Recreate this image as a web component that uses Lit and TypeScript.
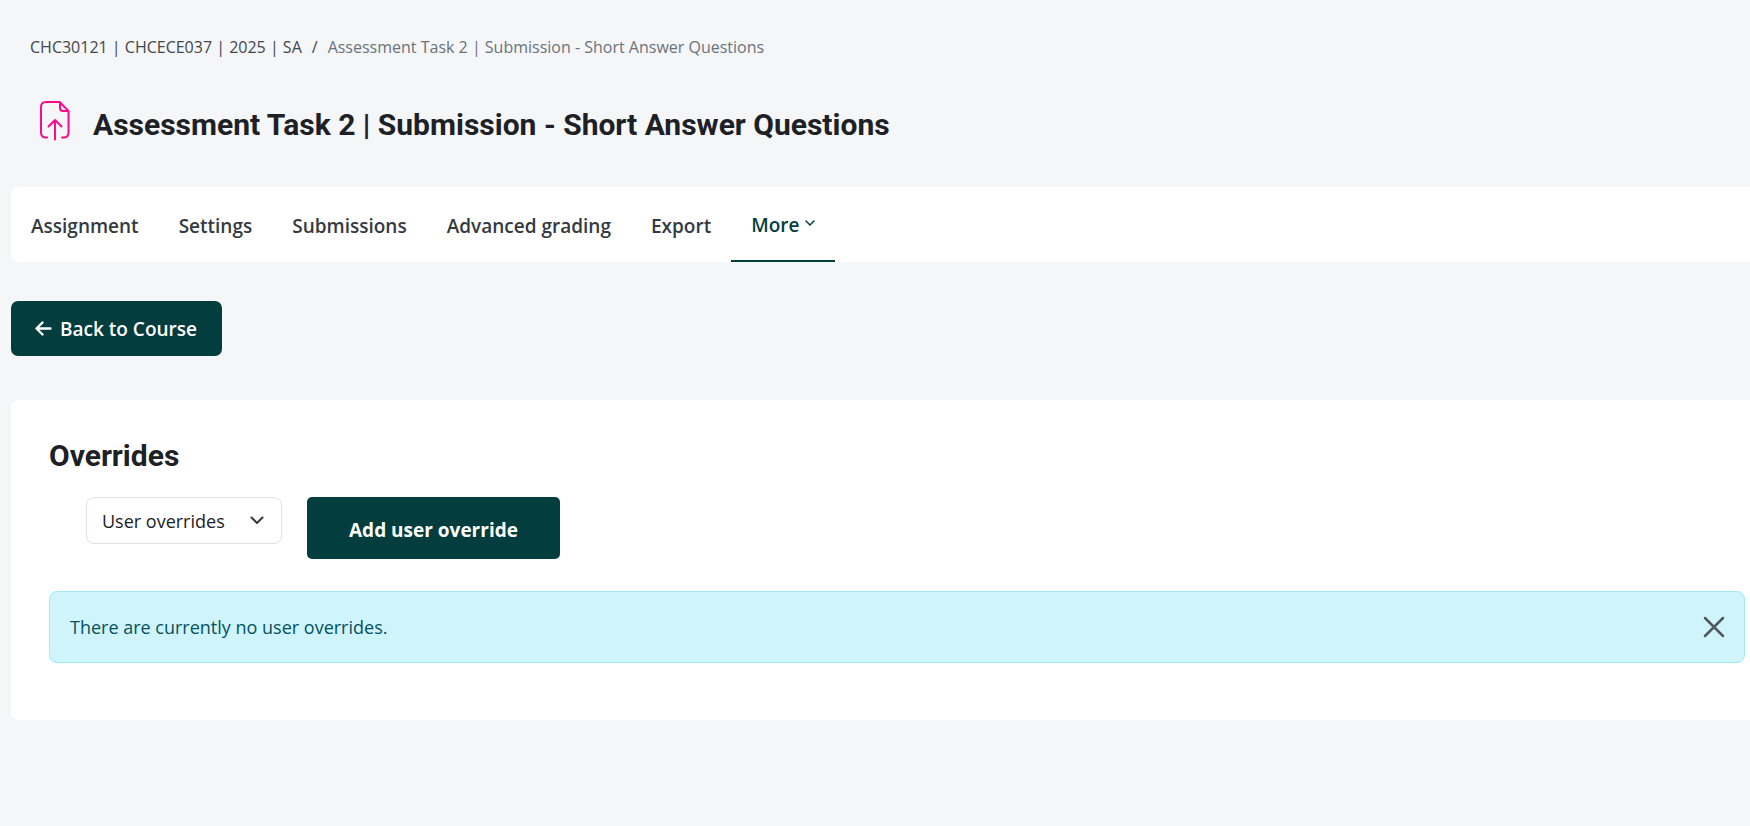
import { LitElement, html, css } from "lit";
import { customElement, state } from "lit/decorators.js";

const COURSE = "CHC30121 | CHCECE037 | 2025 | SA";
const ACTIVITY = "Assessment Task 2 | Submission - Short Answer Questions";
const TABS = ["Assignment", "Settings", "Submissions", "Advanced grading", "Export"];

@customElement("app-root")
export class AppRoot extends LitElement {
  @state() private mode = "user";
  @state() private noticeOpen = true;

  static styles = css`
    :host {
      display: block;
      box-sizing: border-box;
      min-height: 100vh;
      padding: 33px 0 40px 11px;
      background: #f4f6f8;
      color: #1d2125;
      font-family: "Segoe UI", "Open Sans", "Noto Sans", sans-serif;
      font-size: 19px;
      line-height: 28px;
    }
    * {
      box-sizing: border-box;
    }
    a {
      color: inherit;
      text-decoration: none;
    }
    button,
    select {
      font: inherit;
      margin: 0;
    }
    svg {
      display: block;
      fill: none;
      stroke: currentColor;
      stroke-linecap: round;
      stroke-linejoin: round;
    }
    .crumbs {
      display: flex;
      flex-wrap: wrap;
      gap: 10px;
      margin: 0;
      padding: 0 19px;
      list-style: none;
      font-size: 16px;
      color: #42474c;
    }
    .current {
      color: #6a737b;
    }
    .header {
      display: flex;
      align-items: flex-start;
      gap: 21px;
      padding: 38px 28px 44px;
    }
    h1,
    h2 {
      margin: 0;
      font-family: Roboto, sans-serif;
      font-size: 30px;
      font-weight: 700;
      line-height: 36px;
    }
    h1 {
      padding-top: 8px;
    }
    .activity-icon {
      color: #ff0a8c;
    }
    .tabs {
      display: flex;
      background: #fff;
      border-radius: 8px 0 0 8px;
    }
    .tab {
      display: flex;
      align-items: center;
      gap: 6px;
      height: 75px;
      padding: 4px 20px 0;
      border: 0;
      border-bottom: 2px solid transparent;
      background: none;
      color: #343a40;
      font-weight: 600;
    }
    .active {
      padding-top: 2px;
      border-color: #043d3d;
      color: #043d3d;
    }
    .back {
      display: inline-flex;
      align-items: center;
      gap: 8px;
      height: 55px;
      margin: 39px 0 44px;
      padding: 0 25px 0 24px;
      border-radius: 7px;
      background: #043d3d;
      color: #fff;
      font-weight: 600;
    }
    .card {
      padding: 38px 5px 57px 38px;
      border-radius: 8px 0 0 8px;
      background: #fff;
    }
    .actions {
      display: flex;
      align-items: flex-start;
      gap: 25px;
      padding: 23px 0 32px 37px;
    }
    .picker {
      display: grid;
      align-items: center;
    }
    .picker > * {
      grid-area: 1 / 1;
    }
    .picker svg {
      z-index: 1;
      justify-self: end;
      margin-right: 18px;
      color: #343a40;
      pointer-events: none;
    }
    select,
    .notice {
      font-size: 18px;
    }
    select {
      height: 47px;
      padding: 0 42px 0 15px;
      border: 1px solid #dee2e6;
      border-radius: 8px;
      appearance: none;
      background: #fff;
      color: #1d2125;
    }
    .add {
      height: 62px;
      padding: 4px 42px 0;
      border: 0;
      border-radius: 5px;
      background: #043d3d;
      color: #fff;
      font-weight: 700;
    }
    .notice {
      display: flex;
      align-items: center;
      justify-content: space-between;
      min-height: 72px;
      padding: 0 19px 0 20px;
      border: 1px solid #9eeaf9;
      border-radius: 8px;
      background: #cff4fc;
      color: #055160;
    }
    .notice p {
      margin: 0;
    }
    .close {
      padding: 0;
      border: 0;
      background: none;
      color: #52595c;
    }
  `;

  render() {
    return html`
      <nav aria-label="Breadcrumb">
        <ol class="crumbs">
          <li><a href="#course">${COURSE}</a></li>
          <li aria-hidden="true">/</li>
          <li class="current" aria-current="page">${ACTIVITY}</li>
        </ol>
      </nav>

      <header class="header">
        <svg class="activity-icon" width="33" height="42" viewBox="0 0 33 42" stroke-width="2" aria-hidden="true">
          <path d="M8 38.500H7Q2 38.500 2 33.500V8Q2 3 7 3H20.500L29.500 12V33.500Q29.500 38.500 24.500 38.500H23" />
          <path d="M21 3.500V9Q21 12 24 12H29" />
          <path d="M16 40.500V21M9.500 27.500L16 21L22.500 27.500" />
        </svg>
        <h1>${ACTIVITY}</h1>
      </header>

      <nav class="tabs" aria-label="Activity">
        ${TABS.map((tab) => html`<a class="tab" href="#tab">${tab}</a>`)}
        <button class="tab active" type="button" aria-haspopup="true">
          More
          <svg width="10" height="10" viewBox="0 0 10 10" stroke-width="1.500" aria-hidden="true">
            <path d="M1 1L5 5L9 1" />
          </svg>
        </button>
      </nav>

      <a class="back" href="#course">
        <svg width="17" height="16" viewBox="0 0 17 16" stroke-width="2.400" aria-hidden="true">
          <path d="M15.500 7.500H2M7.500 1.500L1.500 7.500L7.500 13.500" />
        </svg>
        Back to Course
      </a>

      <main class="card">
        <h2>Overrides</h2>
        <div class="actions">
          <div class="picker">
            <select
              aria-label="Override type"
              .value=${this.mode}
              @change=${(e: Event) => (this.mode = (e.target as HTMLSelectElement).value)}
            >
              <option value="user">User overrides</option>
              <option value="group">Group overrides</option>
            </select>
            <svg width="14" height="9" viewBox="0 0 14 9" stroke-width="2" aria-hidden="true">
              <path d="M1.500 1.500L7 7L12.500 1.500" />
            </svg>
          </div>
          <button class="add" type="button">Add ${this.mode} override</button>
        </div>
        ${this.noticeOpen
          ? html`<div class="notice" role="alert">
              <p>There are currently no ${this.mode} overrides.</p>
              <button class="close" type="button" aria-label="Dismiss" @click=${() => (this.noticeOpen = false)}>
                <svg width="22" height="22" viewBox="0 0 22 22" stroke-width="2.500" aria-hidden="true">
                  <path d="M2 2L20 20M20 2L2 20" />
                </svg>
              </button>
            </div>`
          : null}
      </main>
    `;
  }
}
